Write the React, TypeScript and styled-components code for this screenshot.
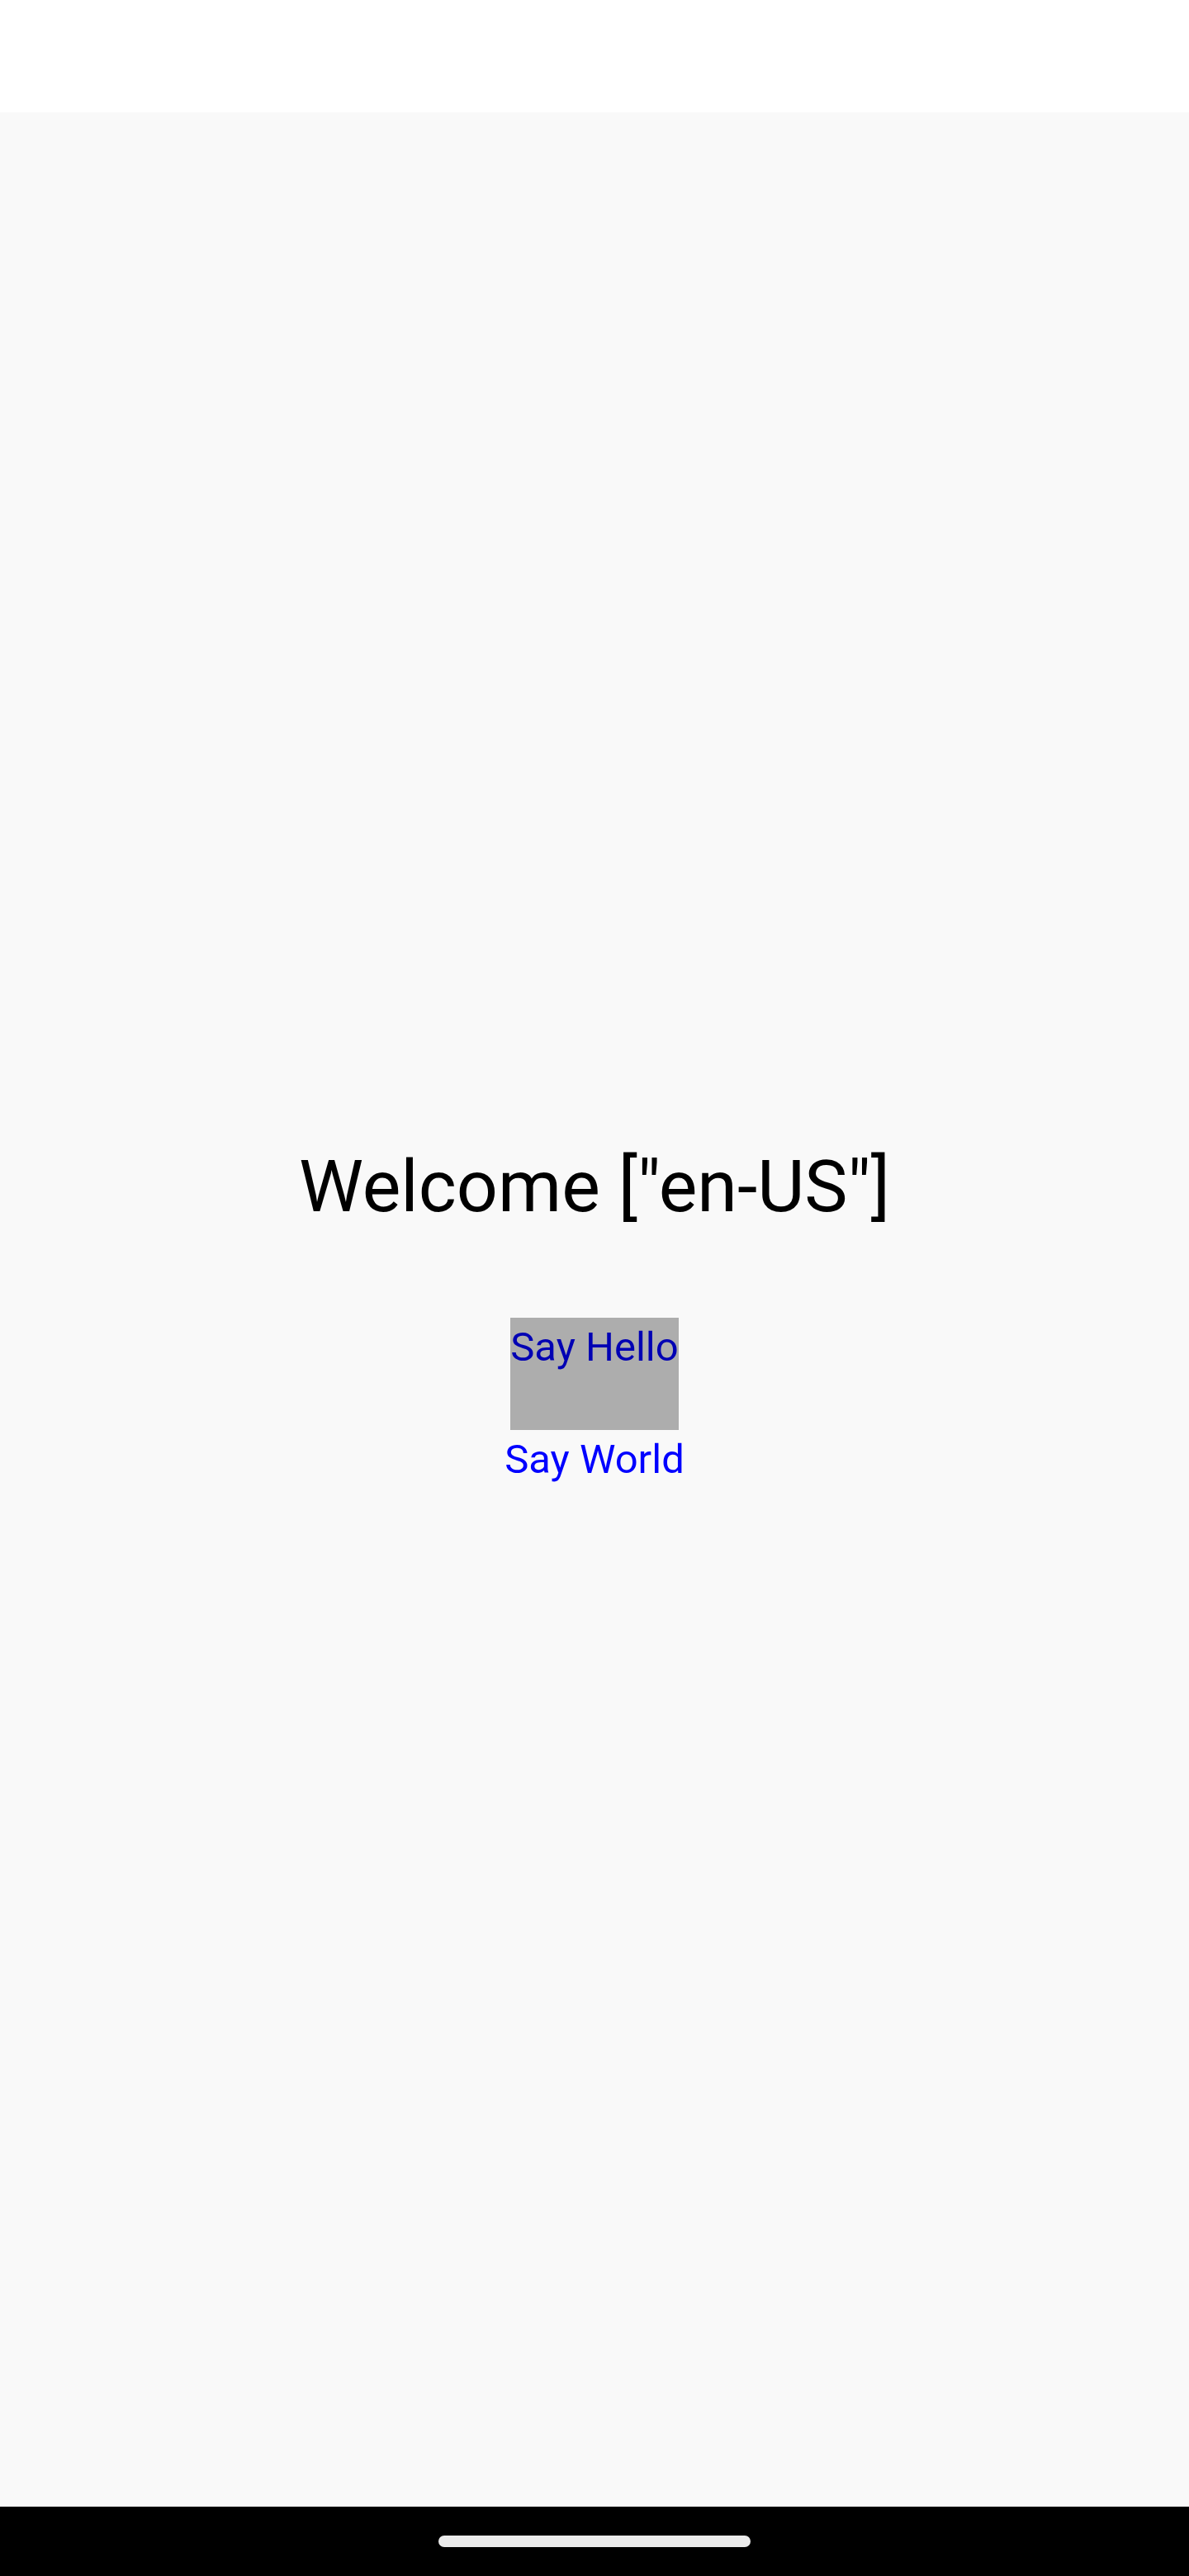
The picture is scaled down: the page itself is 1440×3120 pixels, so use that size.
import React from "react";
import styled, { createGlobalStyle } from "styled-components";

const GlobalStyle = createGlobalStyle`
  html, body {
    margin: 0;
    padding: 0;
    overflow: hidden;
    background: #f9f9f9;
    font-family: Roboto, "Noto Sans", sans-serif;
  }
`;

const Screen = styled.div`
  width: 1440px;
  height: 3120px;
  display: flex;
  flex-direction: column;
  overflow: hidden;
`;

const StatusBar = styled.div`
  height: 136px;
  flex-shrink: 0;
  background: #ffffff;
`;

const Main = styled.main`
  flex: 1;
  min-height: 0;
  box-sizing: border-box;
  background: #f9f9f9;
  display: flex;
  flex-direction: column;
  align-items: center;
  justify-content: center;
  padding-top: 80px;
`;

const Title = styled.h1`
  margin: 0;
  font-family: Roboto, sans-serif;
  font-size: 88px;
  font-weight: 400;
  line-height: 104px;
  color: #000;
`;

const ButtonList = styled.div`
  margin-top: 107px;
  display: flex;
  flex-direction: column;
  align-items: center;
`;

const LinkButton = styled.button<{ pressed?: boolean }>`
  border: none;
  margin: 0;
  padding: 0 0 64px;
  background: ${({ pressed }) => (pressed ? "#adadad" : "transparent")};
  color: ${({ pressed }) => (pressed ? "#0000b4" : "#0000ff")};
  font-family: Roboto, sans-serif;
  font-size: 49px;
  line-height: 72px;
  cursor: pointer;
`;

const NavBar = styled.div`
  height: 84px;
  flex-shrink: 0;
  background: #000;
  display: flex;
  justify-content: center;
  padding-top: 35px;
  box-sizing: border-box;
`;

const HomeHandle = styled.div`
  width: 378px;
  height: 14px;
  border-radius: 7px;
  background: #ebebeb;
`;

export default function App() {
  return (
    <>
      <GlobalStyle />
      <Screen>
        <StatusBar />
        <Main>
          <Title>Welcome ["en-US"]</Title>
          <ButtonList>
            <LinkButton pressed>Say Hello</LinkButton>
            <LinkButton>Say World</LinkButton>
          </ButtonList>
        </Main>
        <NavBar>
          <HomeHandle />
        </NavBar>
      </Screen>
    </>
  );
}
